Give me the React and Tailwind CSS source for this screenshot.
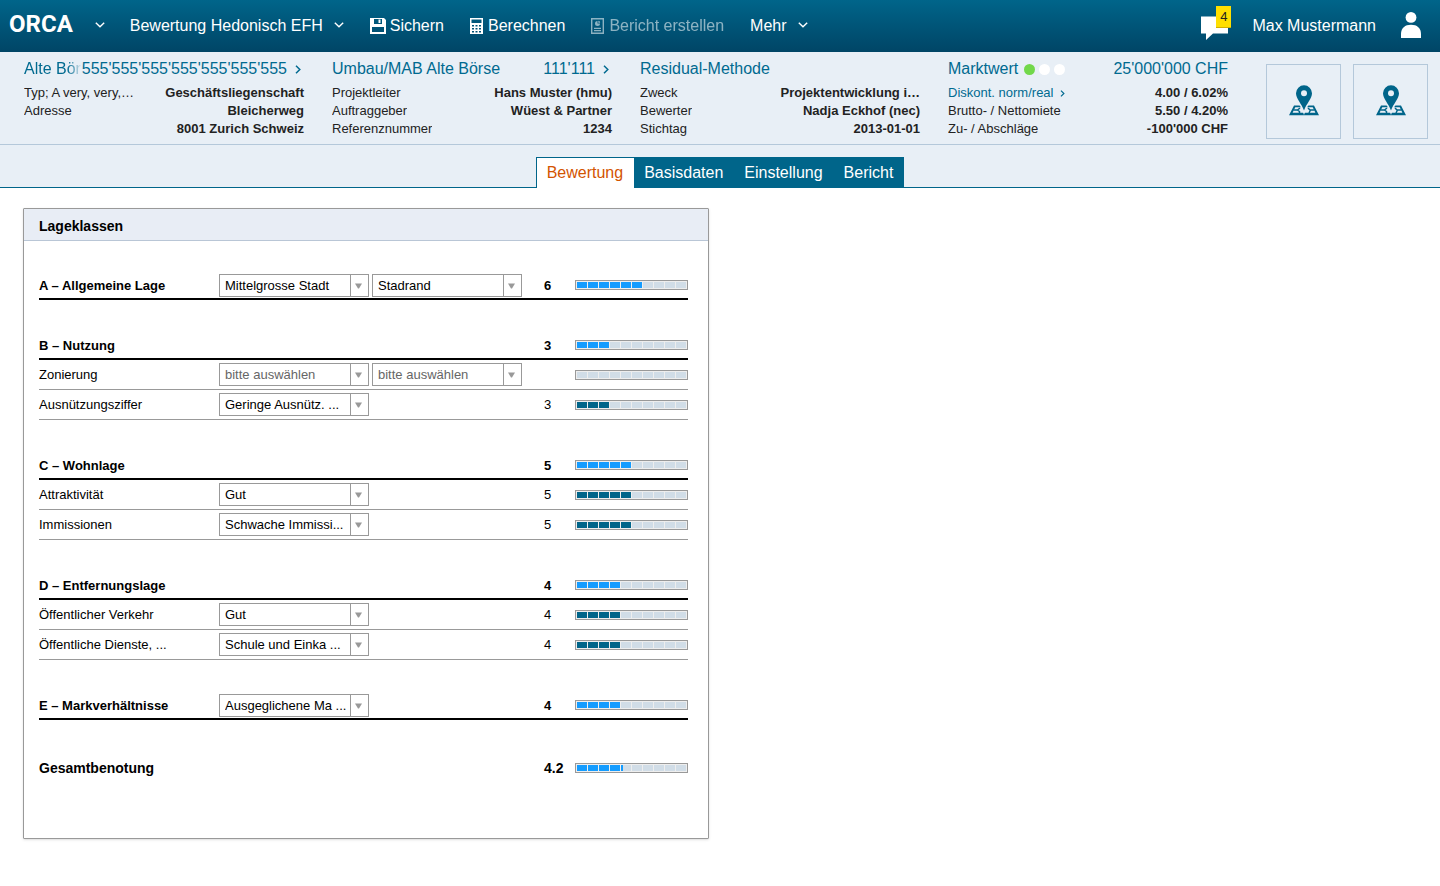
import React from "react";

const Chevron = () => (
  <svg viewBox="0 0 10 6" className="mb-[3px] h-[6px] w-[10px] fill-none stroke-white" aria-hidden="true">
    <path d="M0.8 0.8 L5 4.8 L9.2 0.8" strokeWidth="1.4" />
  </svg>
);

const Arrow = ({ small }) => (
  <svg
    viewBox="0 0 6 9"
    className={small ? "h-[7px] w-[5px] shrink-0 fill-none stroke-[#006a90]" : "h-[9px] w-[6px] shrink-0 fill-none stroke-[#006a90]"}
    aria-hidden="true"
  >
    <path d="M1 0.8 L4.8 4.5 L1 8.2" strokeWidth="1.5" />
  </svg>
);

const SaveIcon = () => (
  <svg viewBox="0 0 16 16" className="size-4" aria-hidden="true">
    <path fill="#fff" fillRule="evenodd" d="M0 0H14L16 2V16H0ZM4 1V6H12V1ZM2 9V14H14V9Z" />
    <path fill="#fff" d="M8.500 1.500H10.500V5H8.500Z" />
  </svg>
);

const CalcIcon = () => (
  <svg viewBox="0 0 13 16" className="h-4 w-[13px]" aria-hidden="true">
    <path
      fill="#fff"
      fillRule="evenodd"
      d="M0 0H13V16H0ZM1.500 1.500V5H11.500V1.500ZM2 7V8.500H4V7ZM5.500 7V8.500H7.500V7ZM9 7V8.500H11V7ZM2 10V11.500H4V10ZM5.500 10V11.500H7.500V10ZM9 10V11.500H11V10ZM2 13V14.500H4V13ZM5.500 13V14.500H7.500V13ZM9 13V14.500H11V13Z"
    />
  </svg>
);

const ReportIcon = () => (
  <svg viewBox="0 0 13 16" className="h-4 w-[13px]" aria-hidden="true">
    <path fill="none" stroke="#fff" strokeWidth="1.400" d="M0.700 0.700H12.300V15.300H0.700Z" />
    <path fill="#fff" d="M6.500 5.500V3A2.500 2.500 0 1 0 9 5.500Z" />
    <path fill="#fff" d="M7.300 4.700V2.800A2 2 0 0 1 9.200 4.700Z" />
    <path stroke="#fff" strokeWidth="1.200" d="M3 10.300H10M3 12.700H10" />
  </svg>
);

const MapIcon = () => (
  <svg viewBox="0 0 30 31" className="h-[31px] w-[30px]" aria-hidden="true">
    <path
      fill="#00658a"
      fillRule="evenodd"
      d="M5 20.500H25L30 30.300H0ZM6.300 22.300L3.600 27.800H26.400L23.700 22.300Z"
    />
    <path fill="none" stroke="#00658a" strokeWidth="1.500" d="M4.500 25H8.500L11 23M8.500 25L10.500 26.500V28M25.500 25H21L19 23M21.500 25L20 28" />
    <path
      fill="#00658a"
      stroke="#e8eff6"
      strokeWidth="3"
      paintOrder="stroke"
      d="M15 0.300A8 8 0 0 1 23 8.300C23 14 17.500 18.500 15 25.500C12.500 18.500 7 14 7 8.300A8 8 0 0 1 15 0.300Z"
    />
    <circle cx="15" cy="8.300" r="3" fill="#e8eff6" />
  </svg>
);

const columns = [
  {
    title: "Alte Börse",
    value: "555'555'555'555'555'555'555",
    arrow: true,
    rows: [
      ["Typ; A very, very,…", "Geschäftsliegenschaft"],
      ["Adresse", "Bleicherweg"],
      ["", "8001 Zurich Schweiz"],
    ],
  },
  {
    title: "Umbau/MAB Alte Börse",
    value: "111'111",
    arrow: true,
    rows: [
      ["Projektleiter", "Hans Muster (hmu)"],
      ["Auftraggeber", "Wüest & Partner"],
      ["Referenznummer", "1234"],
    ],
  },
  {
    title: "Residual-Methode",
    rows: [
      ["Zweck", "Projektentwicklung i…"],
      ["Bewerter", "Nadja Eckhof (nec)"],
      ["Stichtag", "2013-01-01"],
    ],
  },
  {
    title: "Marktwert",
    lights: true,
    value: "25'000'000 CHF",
    rows: [
      ["Diskont. norm/real", "4.00 / 6.02%", true],
      ["Brutto- / Nettomiete", "5.50 / 4.20%"],
      ["Zu- / Abschläge", "-100'000 CHF"],
    ],
  },
];

function InfoColumn({ title, value, arrow, lights, rows }) {
  const clipped = title === "Alte Börse";
  return (
    <section className="min-w-0 flex-1">
      <h2 className="flex items-center whitespace-nowrap text-base leading-6 text-[#006a90]">
        <span
          className={
            clipped
              ? "min-w-0 flex-1 overflow-hidden [mask-image:linear-gradient(to_right,black_75%,transparent)]"
              : "flex flex-1 items-center gap-[6px]"
          }
        >
          {arrow ? <a href="#objekt">{title}</a> : title}
          {lights && (
            <span className="flex gap-1">
              <i className="size-[11px] rounded-full bg-[#72d84a]" />
              <i className="size-[11px] rounded-full bg-white" />
              <i className="size-[11px] rounded-full bg-white" />
            </span>
          )}
        </span>
        {value && <span>{value}</span>}
        {arrow && (
          <span className="pr-[3px] pl-2">
            <Arrow />
          </span>
        )}
      </h2>
      <dl className="mt-[3px] text-[13px] leading-[18px] text-[#222]">
        {rows.map(([label, text, link]) => (
          <div key={text} className="flex justify-between gap-4">
            <dt className="min-w-0 truncate">
              {link ? (
                <a href="#diskont" className="flex items-center gap-[7px] text-[#006a90]">
                  {label}
                  <Arrow small />
                </a>
              ) : (
                label
              )}
            </dt>
            <dd className="shrink-0 font-bold">{text}</dd>
          </div>
        ))}
      </dl>
    </section>
  );
}

const ratings = [
  { label: "A – Allgemeine Lage", group: true, options: ["Mittelgrosse Stadt", "Stadrand"], score: 6 },
  { label: "B – Nutzung", group: true, options: [], score: 3 },
  { label: "Zonierung", options: ["bitte auswählen", "bitte auswählen"], empty: true },
  { label: "Ausnützungsziffer", options: ["Geringe Ausnütz. ..."], score: 3 },
  { label: "C – Wohnlage", group: true, options: [], score: 5 },
  { label: "Attraktivität", options: ["Gut"], score: 5 },
  { label: "Immissionen", options: ["Schwache Immissi..."], score: 5 },
  { label: "D – Entfernungslage", group: true, options: [], score: 4 },
  { label: "Öffentlicher Verkehr", options: ["Gut"], score: 4 },
  { label: "Öffentliche Dienste, ...", options: ["Schule und Einka ..."], score: 4 },
  { label: "E – Markverhältnisse", group: true, options: ["Ausgeglichene Ma ..."], score: 4 },
];

function Select({ label, value, empty }) {
  return (
    <span className="relative block w-[150px]">
      <select
        aria-label={label}
        defaultValue={value}
        className={`block h-[23px] w-full appearance-none rounded-none border border-[#999] bg-white pr-[18px] pl-[5px] text-[13px] leading-[21px] ${empty ? "text-[#666]" : "text-black"}`}
      >
        <option>{value}</option>
      </select>
      <span className="pointer-events-none absolute inset-y-0 right-0 flex w-[19px] items-center justify-center border-l border-[#999] pr-[3px]">
        <svg viewBox="0 0 7 6" className="h-[6px] w-[7px] fill-[#999]" aria-hidden="true">
          <path d="M0 0.500H7L4 5.500H3Z" />
        </svg>
      </span>
    </span>
  );
}

function ScoreBar({ score = 0, group, label }) {
  return (
    <div
      role="meter"
      aria-label={label}
      aria-valuemin={0}
      aria-valuemax={10}
      aria-valuenow={score}
      className="grid h-[10px] w-[113px] grid-cols-10 gap-px border border-[#999] bg-[#eee] p-px"
    >
      {Array.from({ length: 10 }, (_, i) => (
        <span key={i} className="bg-[#d1dde7]">
          <span
            className={`block h-full ${group ? "bg-[#149cff]" : "bg-[#00658a]"}`}
            style={{ width: `${Math.round(Math.max(0, Math.min(1, score - i)) * 100)}%` }}
          />
        </span>
      ))}
    </div>
  );
}

function RatingRow({ label, group, options, score, empty }) {
  const cell = group ? "h-[60px] align-bottom border-b-2 border-black" : "h-[30px] align-middle border-b border-[#999]";
  const line = group ? "flex h-[25px] items-center" : "flex items-center";
  return (
    <tr>
      <th scope="row" className={`${cell} text-left ${group ? "font-bold" : "font-normal"}`}>
        <div className={line}>{label}</div>
      </th>
      <td className={cell}>
        <div className={`${line} gap-[3px]`}>
          {options.map((value, i) => (
            <Select key={i} label={`${label} ${i + 1}`} value={value} empty={empty} />
          ))}
        </div>
      </td>
      <td className={`${cell} ${group ? "font-bold" : ""}`}>
        <div className={line}>{score}</div>
      </td>
      <td className={cell}>
        <div className={`${line} ${group ? "pb-px" : ""}`}>
          <ScoreBar score={score} group={group} label={label} />
        </div>
      </td>
    </tr>
  );
}

export default function App() {
  return (
    <div className="min-h-screen bg-white font-['Liberation_Sans',Arial,sans-serif] text-black">
      <header className="flex h-[52px] items-center bg-linear-to-b from-[#00658a] to-[#004566] pr-[19px] pl-[9px] text-base whitespace-nowrap text-white">
        <button className="flex items-center gap-[22px]">
          <span className="pb-1 font-['Roboto',sans-serif] text-2xl leading-7 font-bold">ORCA</span>
          <Chevron />
        </button>
        <nav className="ml-[25px] flex items-center gap-[26px]">
          <button className="flex items-center gap-[11px]">
            Bewertung Hedonisch EFH
            <Chevron />
          </button>
          <button className="flex items-center gap-1">
            <SaveIcon />
            Sichern
          </button>
          <button className="flex items-center gap-[5px]">
            <CalcIcon />
            Berechnen
          </button>
          <button disabled className="flex items-center gap-[5px] opacity-55">
            <ReportIcon />
            Bericht erstellen
          </button>
          <button className="flex items-center gap-[11px]">
            Mehr
            <Chevron />
          </button>
        </nav>
        <button aria-label="Nachrichten" className="relative mt-1 mr-6 ml-auto h-6 w-[27px]">
          <svg viewBox="0 0 27 24" className="h-6 w-[27px] fill-white" aria-hidden="true">
            <path d="M0 0.500H27V17.500H12L5 24V17.500H0Z" />
          </svg>
          <span className="absolute -top-[10px] left-[15px] h-[22px] w-[15px] border-b border-[#d0b000] bg-[#ffdf00] text-center text-[13px] leading-[21px] text-[#222]">
            4
          </span>
        </button>
        <button className="flex items-center gap-[25px]">
          Max Mustermann
          <svg viewBox="0 0 20 28" className="h-7 w-5 fill-white" aria-hidden="true">
            <circle cx="10" cy="5.400" r="5.400" />
            <path d="M0 26V22C0 16 4 12.700 10 12.700S20 16 20 22V26Z" />
          </svg>
        </button>
      </header>

      <div className="flex border-b border-[#b4c8da] bg-[#e8eff6] pt-[5px] pr-3 pb-[5px] pl-6">
        <div className="flex min-w-0 flex-1 gap-7">
          {columns.map((column) => (
            <InfoColumn key={column.title} {...column} />
          ))}
        </div>
        <div className="mt-[7px] ml-[38px] flex gap-3">
          {["Karte", "Umgebungskarte"].map((name) => (
            <button key={name} aria-label={name} className="flex size-[75px] items-center justify-center border border-[#b4c8da] pb-[2px]">
              <MapIcon />
            </button>
          ))}
        </div>
      </div>

      <nav className="flex justify-center border-b border-[#00658a] bg-[#e8eff6] pt-3 text-base">
        <a href="#bewertung" aria-current="page" className="-mb-px border-t border-l border-[#00658a] bg-white pr-[11px] pb-px pl-[10px] leading-[29px] text-[#d35400]">
          Bewertung
        </a>
        {["Basisdaten", "Einstellung", "Bericht"].map((name) => (
          <a key={name} href={`#${name.toLowerCase()}`} className="border-t border-[#00658a] bg-[#00658a] pr-[11px] pl-[10px] leading-[29px] text-white">
            {name}
          </a>
        ))}
      </nav>

      <main className="px-[23px] pt-5 pb-12">
        <section className="max-w-[686px] rounded-[1px] border border-[#999] bg-white pb-[60px] text-[13px] shadow-sm">
          <h1 className="border-b border-[#b9c6d6] bg-[#e8edf5] px-[15px] pt-[3px] text-sm leading-[28px] font-bold">Lageklassen</h1>
          <div className="-mt-px pr-5 pl-[15px]">
            <table className="w-full table-fixed border-separate border-spacing-0">
              <colgroup>
                <col className="w-[180px]" />
                <col />
                <col className="w-[31px]" />
                <col className="w-[113px]" />
              </colgroup>
              <tbody>
                {ratings.map((row) => (
                  <RatingRow key={row.label} {...row} />
                ))}
              </tbody>
              <tfoot>
                <tr className="text-sm font-bold">
                  <th scope="row" className="pt-[38px] text-left">
                    Gesamtbenotung
                  </th>
                  <td className="pt-[38px]" />
                  <td className="pt-[38px]">4.2</td>
                  <td className="pt-[38px]">
                    <ScoreBar score={4.2} group label="Gesamtbenotung" />
                  </td>
                </tr>
              </tfoot>
            </table>
          </div>
        </section>
      </main>
    </div>
  );
}
